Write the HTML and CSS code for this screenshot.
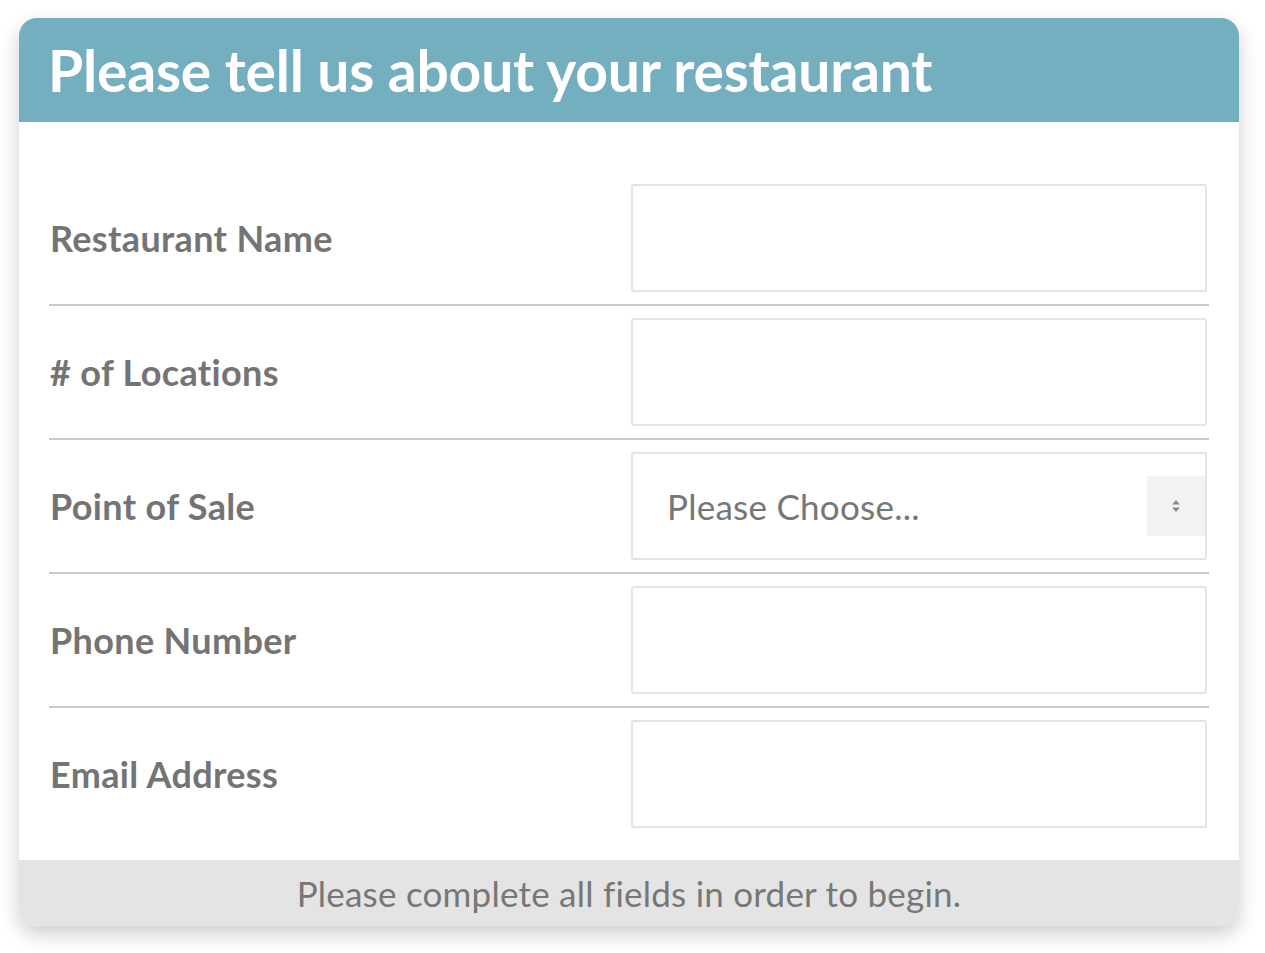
FILE: index.html
```html
<!DOCTYPE html>
<html>
<head>
	<meta charset="utf-8">
	<title>Tell us about your restaurant</title>
	<link rel="stylesheet" href="styles.css">
</head>
<body>
<div class="card">
	<div class="card-header">
		<h1>Please tell us about your restaurant</h1>
	</div>

	<form class="card-body" action="">
		<div class="row">
			<label for="name">Restaurant Name</label>
			<input type="text" id="name" class="field">
		</div>
		<div class="row">
			<label for="locations"># of Locations</label>
			<input type="text" id="locations" class="field">
		</div>
		<div class="row">
			<label>Point of Sale</label>
			<div class="field select">
				<span class="select-text">Please Choose...</span>
				<span class="select-arrow">
					<svg width="10" height="14" viewBox="0 0 10 14">
						<path d="M5 1 L9 5.5 L1 5.5 Z" fill="#8a8a8a"/>
						<path d="M5 13 L9 8.5 L1 8.5 Z" fill="#8a8a8a"/>
					</svg>
				</span>
			</div>
		</div>
		<div class="row">
			<label for="phone">Phone Number</label>
			<input type="text" id="phone" class="field">
		</div>
		<div class="row last">
			<label for="email">Email Address</label>
			<input type="text" id="email" class="field">
		</div>
	</form>

	<div class="card-footer">Please complete all fields in order to begin.</div>
</div>
</body>
</html>
```

FILE: styles.css
```css
body {
	margin: 0;
	padding: 18px 0 27px 19px;
	background-color: #fff;
	font-family: Lato, "Open Sans", sans-serif;
}
.card {
	width: 1220px;
	border-radius: 18px;
	overflow: hidden;
	background-color: #fff;
	box-shadow: 0 8px 20px rgba(0, 0, 0, 0.2);
}
.card-header {
	height: 104px;
	background-color: #73afbf;
	display: flex;
	align-items: center;
	padding-left: 29px;
}
.card-header h1 {
	margin: 0;
	color: #fff;
	font-size: 57px;
	font-weight: 700;
	letter-spacing: -0.2px;
}
.card-body {
	padding: 50px 30px 20px;
}
.row {
	display: grid;
	grid-template-columns: 1fr 576px;
	align-items: center;
	padding: 12px 2px 12px 0;
	border-bottom: 2px solid #c9c9c9;
}
.row.last {
	border-bottom: none;
}
.row label {
	color: #747474;
	font-size: 36px;
	font-weight: 700;
	letter-spacing: 0.35px;
	padding-left: 1px;
}
.field {
	box-sizing: border-box;
	height: 108px;
	width: 576px;
	border: 2px solid #e4e4e4;
	border-radius: 3px;
	background-color: #fff;
	margin: 0;
	font-family: inherit;
}
.select {
	display: flex;
	align-items: center;
	justify-content: space-between;
	padding-left: 34px;
}
.select-text {
	color: #767676;
	font-size: 35px;
	letter-spacing: 0.25px;
}
.select-arrow {
	width: 58px;
	height: 60px;
	background-color: #f2f2f2;
	display: flex;
	align-items: center;
	justify-content: center;
}
.card-footer {
	height: 66px;
	background-color: #e4e4e4;
	color: #777;
	font-size: 35px;
	text-align: center;
	line-height: 66px;
	letter-spacing: 0.23px;
}
```
